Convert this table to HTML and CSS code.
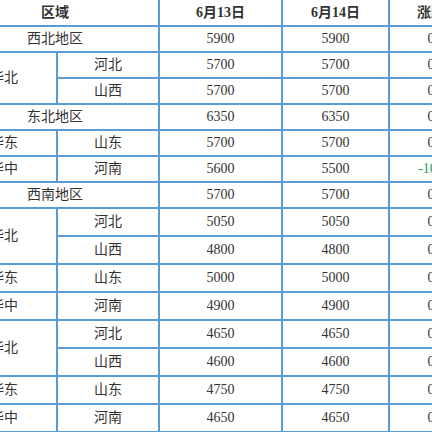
FILE: index.html
```html
<!DOCTYPE html>
<html lang="zh">
<head>
<meta charset="utf-8">
<link rel="stylesheet" href="styles.css">
</head>
<body>
<table class="price">
  <colgroup>
    <col class="c1"><col class="c2"><col class="c3"><col class="c4"><col class="c5">
  </colgroup>
  <thead>
    <tr class="head"><th colspan="2">区域</th><th>6月13日</th><th>6月14日</th><th>涨跌</th></tr>
  </thead>
  <tbody>
    <tr class="r26"><td colspan="2">西北地区</td><td>5900</td><td>5900</td><td>0</td></tr>
    <tr class="r26"><td rowspan="2">华北</td><td>河北</td><td>5700</td><td>5700</td><td>0</td></tr>
    <tr class="r26"><td>山西</td><td>5700</td><td>5700</td><td>0</td></tr>
    <tr class="r26"><td colspan="2">东北地区</td><td>6350</td><td>6350</td><td>0</td></tr>
    <tr class="r26"><td>华东</td><td>山东</td><td>5700</td><td>5700</td><td>0</td></tr>
    <tr class="r26"><td>华中</td><td>河南</td><td>5600</td><td>5500</td><td class="down">-100</td></tr>
    <tr class="r26"><td colspan="2">西南地区</td><td>5700</td><td>5700</td><td>0</td></tr>
    <tr class="r28"><td rowspan="2">华北</td><td>河北</td><td>5050</td><td>5050</td><td>0</td></tr>
    <tr class="r28"><td>山西</td><td>4800</td><td>4800</td><td>0</td></tr>
    <tr class="r28"><td>华东</td><td>山东</td><td>5000</td><td>5000</td><td>0</td></tr>
    <tr class="r28"><td>华中</td><td>河南</td><td>4900</td><td>4900</td><td>0</td></tr>
    <tr class="r28"><td rowspan="2">华北</td><td>河北</td><td>4650</td><td>4650</td><td>0</td></tr>
    <tr class="r28"><td>山西</td><td>4600</td><td>4600</td><td>0</td></tr>
    <tr class="r28"><td>华东</td><td>山东</td><td>4750</td><td>4750</td><td>0</td></tr>
    <tr class="r28"><td>华中</td><td>河南</td><td>4650</td><td>4650</td><td>0</td></tr>
  </tbody>
</table>
</body>
</html>
```
FILE: styles.css
```css
html, body {
  margin: 0;
  padding: 0;
  background: #ffffff;
  overflow: hidden;
}

.price {
  border-collapse: collapse;
  table-layout: fixed;
  width: 522px;
  margin-left: -50px;
  margin-top: -2px;
  font-family: "Liberation Serif", "Noto Sans CJK SC", serif;
  font-size: 14px;
  color: #333333;
}

.c1 { width: 106px; }
.c2 { width: 102px; }
.c3 { width: 123px; }
.c4 { width: 107px; }
.c5 { width: 84px; }

.price th,
.price td {
  border: 2px solid #5b9bd5;
  text-align: center;
  vertical-align: middle;
  padding: 0;
  line-height: 16px;
  white-space: nowrap;
}

.price th {
  font-weight: bold;
  color: #333333;
}

.head { height: 27px; }
.r26 { height: 26px; }
.r28 { height: 28px; }

.price td.down {
  color: #1a9a5a;
}
```
